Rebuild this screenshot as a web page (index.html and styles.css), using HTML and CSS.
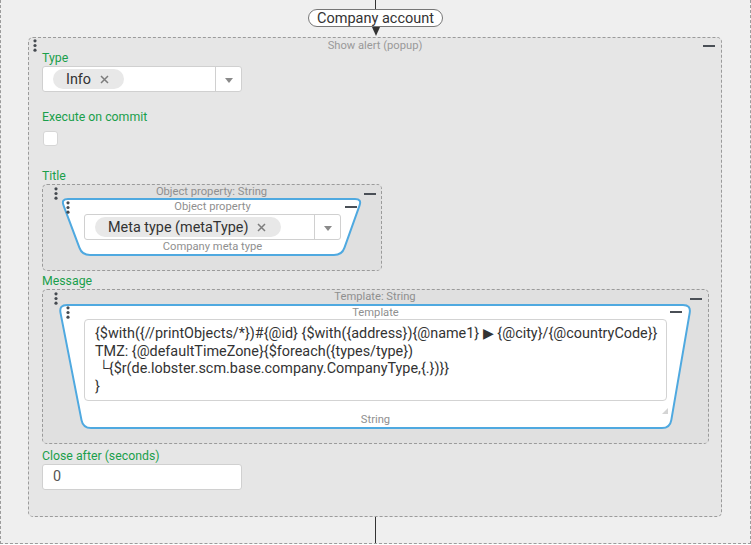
FILE: index.html
```html
<!DOCTYPE html>
<html>
<head>
<meta charset="utf-8">
<link rel="stylesheet" href="styles.css">
</head>
<body>
<div class="canvas">
  <div class="wire-top"></div>
  <div class="pill">Company account</div>
  <div class="arrow"></div>
  <div class="block">
    <svg class="dots dots-main" width="4" height="13" viewBox="0 0 4 13"><circle cx="2" cy="1.8" r="1.6"/><circle cx="2" cy="6.5" r="1.6"/><circle cx="2" cy="11.2" r="1.6"/></svg>
    <span class="minus minus-main"></span>
    <div class="cap cap-block">Show alert (popup)</div>

    <div class="field gap-lg">
      <div class="label">Type</div>
      <div class="select sel-type">
        <div class="select-value">
          <span class="chip">Info<svg class="chip-x" width="9" height="9" viewBox="0 0 9 9"><path d="M1 1L8 8M8 1L1 8"/></svg></span>
        </div>
        <div class="select-toggle"><span class="caret"></span></div>
      </div>
    </div>

    <div class="field gap-lg">
      <div class="label">Execute on commit</div>
      <div class="check-row"><span class="checkbox"></span></div>
    </div>

    <div class="field gap-sm">
      <div class="label">Title</div>
      <div class="nest nest-title">
        <svg class="dots dots-nest" width="4" height="13" viewBox="0 0 4 13"><circle cx="2" cy="1.8" r="1.6"/><circle cx="2" cy="6.5" r="1.6"/><circle cx="2" cy="11.2" r="1.6"/></svg>
        <span class="minus minus-nest-title"></span>
        <div class="cap cap-nest">Object property: String</div>
        <div class="trap trap-title">
          <svg class="trap-shape" width="303" height="58" viewBox="0 0 303 58"><path d="M8 1H295Q302 1 299.5 7.6L284.5 49.6Q282 57 274 57H30Q22 57 19.4 49.6L3.6 7.6Q1 1 8 1Z"/></svg>
          <svg class="dots dots-trap-title" width="4" height="13" viewBox="0 0 4 13"><circle cx="2" cy="1.8" r="1.6"/><circle cx="2" cy="6.5" r="1.6"/><circle cx="2" cy="11.2" r="1.6"/></svg>
          <span class="minus minus-trap-title"></span>
          <div class="trap-content">
            <div class="cap cap-trap">Object property</div>
            <div class="select sel-meta">
              <div class="select-value">
                <span class="chip">Meta type (metaType)<svg class="chip-x" width="9" height="9" viewBox="0 0 9 9"><path d="M1 1L8 8M8 1L1 8"/></svg></span>
              </div>
              <div class="select-toggle"><span class="caret"></span></div>
            </div>
            <div class="cap cap-sub">Company meta type</div>
          </div>
        </div>
      </div>
    </div>

    <div class="field gap-sm2">
      <div class="label">Message</div>
      <div class="nest nest-tpl">
        <svg class="dots dots-nest" width="4" height="13" viewBox="0 0 4 13"><circle cx="2" cy="1.8" r="1.6"/><circle cx="2" cy="6.5" r="1.6"/><circle cx="2" cy="11.2" r="1.6"/></svg>
        <span class="minus minus-nest-tpl"></span>
        <div class="cap cap-nest cap-nest-tpl">Template: String</div>
        <div class="trap trap-tpl">
          <svg class="trap-shape" width="634" height="125" viewBox="0 0 634 125"><path d="M9 1H625Q633 1 631.7 8.9L613.3 116.1Q612 124 604 124H33Q25 124 23.5 116.1L2.5 8.9Q1 1 9 1Z"/></svg>
          <svg class="dots dots-trap-tpl" width="4" height="13" viewBox="0 0 4 13"><circle cx="2" cy="1.8" r="1.6"/><circle cx="2" cy="6.5" r="1.6"/><circle cx="2" cy="11.2" r="1.6"/></svg>
          <span class="minus minus-trap-tpl"></span>
          <div class="trap-content">
            <div class="cap cap-trap cap-trap-tpl">Template</div>
            <div class="tpl">{$with({//printObjects/*})#{@id} {$with({address}){@name1} ▶ {@city}/{@countryCode}}
TMZ: {@defaultTimeZone}{$foreach({types/type})
 └{$r(de.lobster.scm.base.company.CompanyType,{.})}}
}</div>
            <div class="handle-row"><svg class="handle" width="6" height="6" viewBox="0 0 6 6"><path d="M6 0V6H0Z"/></svg></div>
            <div class="cap cap-sub">String</div>
          </div>
        </div>
      </div>
    </div>

    <div class="field">
      <div class="label">Close after (seconds)</div>
      <div class="input">0</div>
    </div>
  </div>
  <div class="wire-bottom"></div>
</div>
</body>
</html>
```

FILE: styles.css
```css
* { box-sizing: border-box; }
html, body { margin: 0; padding: 0; }
body {
  background: #ffffff;
  font-family: Roboto, "Liberation Sans", sans-serif;
  color: #333;
  width: 751px;
  height: 545px;
  overflow: hidden;
}
.canvas {
  width: 751px;
  height: 544px;
  background: #efefef;
  border: 1px dashed #9b9b9b;
  border-top: none;
  display: flex;
  flex-direction: column;
  align-items: center;
}
.wire-top { width: 1px; height: 9px; background: #333; flex: none; }
.wire-bottom { flex: 1; width: 1px; background: #333; }
.pill {
  flex: none;
  height: 18px;
  line-height: 17px;
  padding: 0 8px;
  border: 1px solid #777;
  border-radius: 9px;
  background: #fff;
  font-size: 14.5px;
  color: #333;
}
.arrow {
  flex: none;
  width: 0;
  height: 0;
  border-top: 9px solid #333;
  border-left: 4.5px solid transparent;
  border-right: 4.5px solid transparent;
}
.block {
  flex: none;
  align-self: flex-start;
  margin: 1px 0 0 27px;
  width: 694px;
  height: 480px;
  position: relative;
  background: #e6e6e6;
  border: 1px dashed #9b9b9b;
  border-radius: 5px;
  padding: 0 13px;
}
.cap {
  font-size: 11.2px;
  color: #8f8f8f;
  text-align: center;
  white-space: nowrap;
}
.cap-block { height: 12px; line-height: 15px; color: #999; }
.label {
  font-size: 12.3px;
  line-height: 16px;
  height: 16px;
  color: #1a9f4b;
}
.gap-lg { margin-bottom: 17px; }
.gap-sm { margin-bottom: 2px; }
.gap-sm2 { margin-bottom: 4px; }

.dots { position: absolute; fill: #454a50; }
.dots-main { left: 4px; top: 1px; }
.dots-nest { left: 11px; top: 2px; }
.dots-trap-title { left: 6px; top: 3px; z-index: 2; }
.dots-trap-tpl { left: 8px; top: 2px; z-index: 2; }

.minus { position: absolute; width: 12px; height: 2px; background: #4a4f56; }
.minus-main { right: 6px; top: 7px; }
.minus-nest-title { right: 5px; top: 8px; }
.minus-trap-title { right: 6px; top: 8px; z-index: 2; }
.minus-nest-tpl { right: 6px; top: 8px; }
.minus-trap-tpl { right: 10px; top: 7px; z-index: 2; }

.select {
  display: flex;
  height: 26px;
  background: #fff;
  border: 1px solid #d0d0d0;
  border-radius: 3px;
}
.sel-type { width: 200px; }
.sel-meta { width: 257px; }
.select-value {
  flex: 1;
  display: flex;
  align-items: center;
  padding-left: 10px;
}
.select-toggle {
  width: 26px;
  border-left: 1px solid #d0d0d0;
  display: flex;
  align-items: center;
  justify-content: center;
}
.caret {
  width: 0;
  height: 0;
  border-top: 5px solid #8a8a8a;
  border-left: 4.5px solid transparent;
  border-right: 4.5px solid transparent;
  margin-top: 2px;
}
.chip {
  display: flex;
  align-items: center;
  gap: 9px;
  height: 20px;
  border-radius: 10px;
  background: #e8e8e8;
  padding: 0 15px 0 13px;
  font-size: 14.4px;
  color: #333;
  white-space: nowrap;
}
.chip-x { stroke: #7d7d7d; stroke-width: 1.5; fill: none; }

.check-row { height: 26px; display: flex; align-items: center; padding-left: 1px; }
.checkbox {
  width: 15px;
  height: 15px;
  background: #fff;
  border: 1px solid #d6d6d6;
  border-radius: 3px;
}

.nest {
  position: relative;
  background: #e0e0e0;
  border: 1px dashed #9b9b9b;
  border-radius: 5px;
}
.nest-title { width: 340px; height: 87px; padding: 0 18px 0 17px; }
.nest-tpl { width: 667px; height: 155px; padding: 0 16px 0 15px; }
.cap-nest { height: 13px; line-height: 14px; }
.cap-nest-tpl { height: 14px; }

.trap { position: relative; }
.trap-title { width: 303px; height: 58px; padding: 2px 22px 2px 24px; }
.trap-tpl { width: 634px; height: 125px; padding: 2px 25px 2px 26px; }
.trap-shape {
  position: absolute;
  left: 0;
  top: 0;
  fill: #fff;
  stroke: #4fa9e0;
  stroke-width: 2;
}
.trap-content { position: relative; }
.cap-trap { line-height: 14px; height: 14px; }
.cap-trap-tpl { height: 13px; line-height: 13px; }
.cap-sub { line-height: 14px; height: 14px; }

.tpl {
  height: 82px;
  background: #fff;
  border: 1px solid #d3d3d3;
  border-radius: 4px;
  padding: 5px 10px;
  font-size: 14.4px;
  line-height: 17.7px;
  color: #333;
  white-space: pre;
  overflow: hidden;
}
.handle-row {
  height: 12px;
  display: flex;
  justify-content: flex-end;
  align-items: flex-end;
  margin-right: -1px;
}
.handle { fill: #d4d4d4; margin-bottom: -1px; }

.input {
  width: 200px;
  height: 26px;
  background: #fff;
  border: 1px solid #d0d0d0;
  border-radius: 3px;
  padding-left: 10px;
  font-size: 14.4px;
  line-height: 24px;
  color: #555;
}
```
